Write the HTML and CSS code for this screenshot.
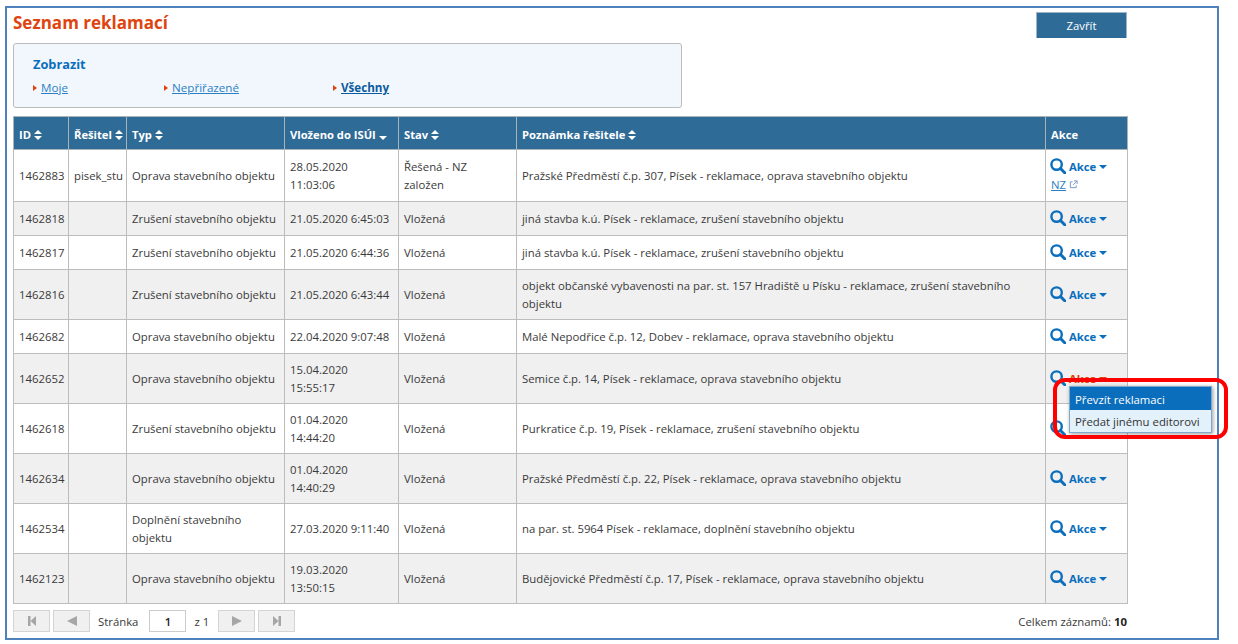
FILE: index.html
```html
<!DOCTYPE html>
<html lang="cs">
<head>
<meta charset="utf-8">
<title>Seznam reklamací</title>
<link rel="stylesheet" href="styles.css">
</head>
<body>
<svg class="defs" width="0" height="0" aria-hidden="true">
  <symbol id="sort" viewBox="0 0 8 10"><path d="M4 0 8 4H0ZM0 6H8L4 10Z"/></symbol>
  <symbol id="lens" viewBox="0 0 16 16"><circle cx="6.6" cy="6.6" r="5.2" fill="none" stroke="currentColor" stroke-width="2.4"/><path d="M10.5 10.5 15 15" fill="none" stroke="currentColor" stroke-width="3" stroke-linecap="round"/></symbol>
</svg>
<main class="frame">
  <header class="top">
    <h1 class="title">Seznam reklamací</h1>
    <button class="close">Zavřít</button>
  </header>
  <section class="filter">
    <h2 class="filter-title">Zobrazit</h2>
    <div class="filter-links">
      <span class="flink f1"><a href="#">Moje</a></span>
      <span class="flink f2"><a href="#">Nepřiřazené</a></span>
      <span class="flink"><a href="#" class="strong">Všechny</a></span>
    </div>
  </section>
  <table class="grid">
    <colgroup><col class="c1"><col class="c2"><col class="c3"><col class="c4"><col class="c5"><col class="c6"><col class="c7"></colgroup>
    <thead>
      <tr>
        <th>ID <svg class="sort"><use href="#sort"/></svg></th>
        <th>Řešitel <svg class="sort"><use href="#sort"/></svg></th>
        <th>Typ <svg class="sort"><use href="#sort"/></svg></th>
        <th>Vloženo do ISÚI <svg class="sortdown" viewBox="0 0 8 4"><path d="M0 0H8L4 4Z"/></svg></th>
        <th>Stav <svg class="sort"><use href="#sort"/></svg></th>
        <th>Poznámka řešitele <svg class="sort"><use href="#sort"/></svg></th>
        <th>Akce</th>
      </tr>
    </thead>
    <tbody>
      <tr class="h52">
        <td>1462883</td><td>pisek_stu</td><td>Oprava stavebního objektu</td><td>28.05.2020<br>11:03:06</td><td>Řešená - NZ<br>založen</td><td>Pražské Předměstí č.p. 307, Písek - reklamace, oprava stavebního objektu</td>
        <td><a class="akce" href="#"><svg class="lens"><use href="#lens"/></svg>Akce<i class="caret"></i></a><br><a class="nz" href="#">NZ</a> <svg class="ext" viewBox="0 0 10 10"><path d="M4 2H1.500V8.500H8V6M5.500 1H9V4.500M9 1 4.500 5.500" fill="none" stroke="currentColor"/></svg></td>
      </tr>
      <tr class="h34">
        <td>1462818</td><td></td><td>Zrušení stavebního objektu</td><td>21.05.2020 6:45:03</td><td>Vložená</td><td>jiná stavba k.ú. Písek - reklamace, zrušení stavebního objektu</td>
        <td><a class="akce" href="#"><svg class="lens"><use href="#lens"/></svg>Akce<i class="caret"></i></a></td>
      </tr>
      <tr class="h34">
        <td>1462817</td><td></td><td>Zrušení stavebního objektu</td><td>21.05.2020 6:44:36</td><td>Vložená</td><td>jiná stavba k.ú. Písek - reklamace, zrušení stavebního objektu</td>
        <td><a class="akce" href="#"><svg class="lens"><use href="#lens"/></svg>Akce<i class="caret"></i></a></td>
      </tr>
      <tr class="h50">
        <td>1462816</td><td></td><td>Zrušení stavebního objektu</td><td>21.05.2020 6:43:44</td><td>Vložená</td><td>objekt občanské vybavenosti na par. st. 157 Hradiště u Písku - reklamace, zrušení stavebního objektu</td>
        <td><a class="akce" href="#"><svg class="lens"><use href="#lens"/></svg>Akce<i class="caret"></i></a></td>
      </tr>
      <tr class="h34">
        <td>1462682</td><td></td><td>Oprava stavebního objektu</td><td>22.04.2020 9:07:48</td><td>Vložená</td><td>Malé Nepodřice č.p. 12, Dobev - reklamace, oprava stavebního objektu</td>
        <td><a class="akce" href="#"><svg class="lens"><use href="#lens"/></svg>Akce<i class="caret"></i></a></td>
      </tr>
      <tr class="h50">
        <td>1462652</td><td></td><td>Oprava stavebního objektu</td><td>15.04.2020<br>15:55:17</td><td>Vložená</td><td>Semice č.p. 14, Písek - reklamace, oprava stavebního objektu</td>
        <td><a class="akce hot" href="#"><svg class="lens"><use href="#lens"/></svg>Akce<i class="caret"></i></a></td>
      </tr>
      <tr class="h50">
        <td>1462618</td><td></td><td>Zrušení stavebního objektu</td><td>01.04.2020<br>14:44:20</td><td>Vložená</td><td>Purkratice č.p. 19, Písek - reklamace, zrušení stavebního objektu</td>
        <td><a class="akce" href="#"><svg class="lens"><use href="#lens"/></svg>Akce<i class="caret"></i></a></td>
      </tr>
      <tr class="h50">
        <td>1462634</td><td></td><td>Oprava stavebního objektu</td><td>01.04.2020<br>14:40:29</td><td>Vložená</td><td>Pražské Předměstí č.p. 22, Písek - reklamace, oprava stavebního objektu</td>
        <td><a class="akce" href="#"><svg class="lens"><use href="#lens"/></svg>Akce<i class="caret"></i></a></td>
      </tr>
      <tr class="h50">
        <td>1462534</td><td></td><td>Doplnění stavebního objektu</td><td>27.03.2020 9:11:40</td><td>Vložená</td><td>na par. st. 5964 Písek - reklamace, doplnění stavebního objektu</td>
        <td><a class="akce" href="#"><svg class="lens"><use href="#lens"/></svg>Akce<i class="caret"></i></a></td>
      </tr>
      <tr class="h50">
        <td>1462123</td><td></td><td>Oprava stavebního objektu</td><td>19.03.2020<br>13:50:15</td><td>Vložená</td><td>Budějovické Předměstí č.p. 17, Písek - reklamace, oprava stavebního objektu</td>
        <td><a class="akce" href="#"><svg class="lens"><use href="#lens"/></svg>Akce<i class="caret"></i></a></td>
      </tr>
    </tbody>
  </table>
  <footer class="pager">
    <span class="pbtn"><svg viewBox="0 0 10 10"><path d="M1 0H3.500V10H1ZM3.500 5 9 0V10Z"/></svg></span>
    <span class="pbtn prev"><svg viewBox="0 0 12 10"><path d="M1 5 11 0V10Z"/></svg></span>
    <span class="plabel l1">Stránka</span>
    <span class="pinput">1</span>
    <span class="plabel l2">z 1</span>
    <span class="pbtn next"><svg viewBox="0 0 12 10"><path d="M11 5 1 0V10Z"/></svg></span>
    <span class="pbtn"><svg viewBox="0 0 10 10"><path d="M9 0H6.500V10H9ZM6.500 5 1 0V10Z"/></svg></span>
    <span class="total">Celkem záznamů: <b>10</b></span>
  </footer>
  <div class="menu">
    <div class="mitem active">Převzít reklamaci</div>
    <div class="mitem">Předat jinému editorovi</div>
  </div>
  <div class="callout"></div>
</main>
</body>
</html>
```

FILE: styles.css
```css
* { box-sizing: border-box; }
html, body { margin: 0; padding: 0; background: #fff; }
body { font-family: "Open Sans", "Noto Sans", sans-serif; font-size: 11.35px; color: #3a3a3a; height: 644px; overflow: hidden; }
.defs { position: absolute; }
.frame { position: absolute; left: 5px; top: 6px; width: 1214px; height: 634px; border: 2px solid #4f81bd; padding: 5px 6px 0; }
.top { display: flex; justify-content: space-between; align-items: flex-start; width: 1114px; height: 30px; }
.title { margin: -1px 0 0; font-size: 17px; line-height: 22px; font-weight: 700; color: #e0440e; }
.close { width: 91px; height: 26px; border: 1px solid #9fb4c6; border-bottom: 0; background: #2e6b97; color: #fff; font: 11.35px "Open Sans", sans-serif; padding: 0; margin-top: -1px; }
.filter { width: 669px; height: 65px; border: 1px solid #bbb; border-radius: 3px; background: #f2f7fd; padding: 11px 19px 0; }
.filter-title { margin: 0; font-size: 12.8px; line-height: 18px; font-weight: 700; color: #0a6ebd; }
.filter-links { display: flex; margin-top: 7px; line-height: 16px; font-size: 11.65px; }
.flink { padding-left: 8px; position: relative; }
.flink::before { content: ""; position: absolute; left: 0; top: 5px; border-left: 4px solid #e0440e; border-top: 3px solid transparent; border-bottom: 3px solid transparent; }
.f1 { width: 131px; }
.f2 { width: 169px; }
.flink a { color: #2a7fc5; }
.flink a.strong { color: #0b5c9e; font-weight: 700; }
.grid { border-collapse: collapse; table-layout: fixed; width: 1114px; margin-top: 8px; line-height: 18px; }
.c1 { width: 55px; } .c2 { width: 58px; } .c3 { width: 158px; } .c4 { width: 114px; } .c5 { width: 118px; } .c6 { width: 529px; } .c7 { width: 82px; }
.grid th, .grid td { border: 1px solid #bdbdbd; padding: 1px 5px 0; text-align: left; vertical-align: middle; }
.grid th { height: 33px; padding-top: 3px; background: #2e6b97; color: #fff; font-size: 11.2px; font-weight: 700; white-space: nowrap; border-color: #a9b3ba; }
.grid tbody tr:nth-child(even) { background: #f0f0f0; }
.h52 { height: 52px; } .h34 { height: 34px; } .h50 { height: 50px; }
.sort { width: 8px; height: 10px; fill: #fff; vertical-align: -1px; }
.sortdown { width: 8px; height: 4px; fill: #fff; vertical-align: -1px; }
.akce { color: #0a6ebd; font-weight: 700; text-decoration: none; font-size: 11.3px; white-space: nowrap; }
.hot { color: #e0440e; }
.hot .lens { color: #0a6ebd; }
.lens { width: 16px; height: 16px; vertical-align: -3px; margin: 0 3px 0 -1px; }
.caret { display: inline-block; border-top: 4px solid currentColor; border-left: 4px solid transparent; border-right: 4px solid transparent; margin-left: 3px; vertical-align: 2px; }
.nz { color: #2a7fc5; }
.ext { width: 9px; height: 9px; color: #6f93c9; }
.pager { display: flex; align-items: center; width: 1114px; height: 33px; gap: 3px; padding-top: 1px; }
.pbtn { display: flex; align-items: center; justify-content: center; width: 37px; height: 22px; background: #f0f0f0; border: 1px solid #d4d4d4; fill: #a6a6a6; }
.pbtn svg { width: 10px; height: 10px; }
.pbtn.prev svg, .pbtn.next svg { width: 12px; height: 10px; }
.l1 { margin: 0 8px 0 5px; }
.l2 { margin: 0 6px 0 5px; }
.pinput { width: 37px; height: 22px; line-height: 21px; border: 1px solid #ccc; text-align: center; font-weight: 600; color: #222; }
.total { margin-left: auto; }
.total b { color: #222; }
.menu { position: absolute; left: 1062px; top: 378px; width: 143px; height: 47px; border: 1px solid #7fa8cc; background: #e3f1fb; box-shadow: 1px 1px 4px rgba(0,0,0,.4); }
.mitem { height: 23px; line-height: 23px; padding-left: 5px; color: #333; }
.mitem.active { background: #0a6ebd; color: #fff; line-height: 25px; }
.callout { position: absolute; left: 1046px; top: 370px; width: 175px; height: 61px; border: 4px solid #f00; border-radius: 12px; }
```
